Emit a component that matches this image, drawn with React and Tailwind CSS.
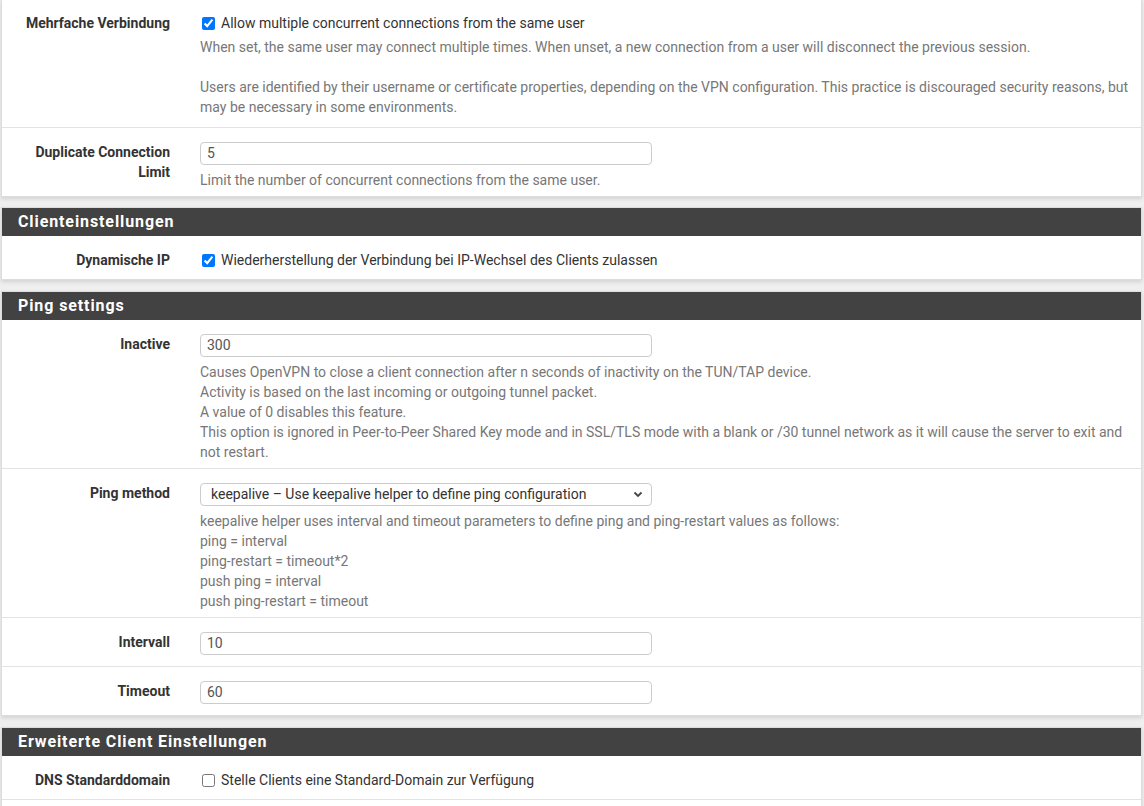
import React from 'react';

const font = { fontFamily: 'Roboto, "Liberation Sans", sans-serif' };

const Header = ({ children }) => (
  <div className="bg-[#424242] h-[28px] flex items-center px-4">
    <h2 className="text-white font-bold text-[16px] tracking-[0.9px]">{children}</h2>
  </div>
);

const Row = ({ label, children, last, extra }) => (
  <div className={`flex pt-[14px] ${extra ? 'pb-[10px]' : 'pb-[6px]'} ${last ? '' : 'border-b border-[#e3e3e3]'}`}>
    <div className="w-[188px] shrink-0 pl-[15px] pr-[20px] text-right">
      <div className="text-[14px] font-bold text-[#333] leading-[20px]">{label}</div>
    </div>
    <div className="flex-1 pl-[10px] pr-[8px]">{children}</div>
  </div>
);

const Help = ({ lines }) => (
  <div className="text-[14px] leading-[20px] text-[#777]">
    {lines.map((l, i) => (
      <div key={i} className="min-h-[20px]">{l}</div>
    ))}
  </div>
);

const TextInput = ({ value }) => (
  <div className="w-[452px] h-[23px] mb-[5px] border border-[#ccc] rounded-[4px] bg-white flex items-center pl-[6px] text-[14px] text-[#555]">
    {value}
  </div>
);

const Check = ({ checked, text }) => (
  <label className="flex items-center h-[20px] mb-[3px] text-[14px] text-[#333]">
    <input
      type="checkbox"
      defaultChecked={checked}
      className="w-[13px] h-[13px] ml-[2px] mr-[6px] accent-[#0075ff]"
    />
    {text}
  </label>
);

const Select = ({ value }) => (
  <div className="w-[452px] h-[23px] mb-[5px] border border-[#ccc] rounded-[4px] bg-white flex items-center justify-between pl-[10px] pr-[8px] text-[14px] text-[#333]">
    <span>{value}</span>
    <svg width="10" height="7" viewBox="0 0 10 7">
      <path d="M1.5 1.5 L5 5 L8.5 1.5" fill="none" stroke="#444" strokeWidth="1.8" />
    </svg>
  </div>
);

const Panel = ({ title, children, top, gap = 'mt-[11px]' }) => (
  <div className={`bg-white border border-[#ddd] shadow-[0_2px_4px_rgba(0,0,0,0.12)] ${top ? 'border-t-0 -mt-px' : gap}`}>
    {title && <Header>{title}</Header>}
    {children}
  </div>
);

export default function App() {
  return (
    <div className="min-h-screen bg-[#efefef] pl-[1px] pr-[2px] overflow-hidden" style={font}>
      <Panel top>
        <Row label="Mehrfache Verbindung" extra>
          <Check checked text="Allow multiple concurrent connections from the same user" />
          <div className="mt-[4px]">
            <Help
              lines={[
                'When set, the same user may connect multiple times. When unset, a new connection from a user will disconnect the previous session.',
                '',
                'Users are identified by their username or certificate properties, depending on the VPN configuration. This practice is discouraged security reasons, but may be necessary in some environments.',
              ]}
            />
          </div>
        </Row>
        <Row label="Duplicate Connection Limit" last>
          <TextInput value="5" />
          <Help lines={['Limit the number of concurrent connections from the same user.']} />
        </Row>
      </Panel>

      <Panel title="Clienteinstellungen" gap="mt-[10px]">
        <Row label="Dynamische IP" last>
          <Check checked text="Wiederherstellung der Verbindung bei IP-Wechsel des Clients zulassen" />
        </Row>
      </Panel>

      <Panel title="Ping settings">
        <Row label="Inactive">
          <TextInput value="300" />
          <Help
            lines={[
              'Causes OpenVPN to close a client connection after n seconds of inactivity on the TUN/TAP device.',
              'Activity is based on the last incoming or outgoing tunnel packet.',
              'A value of 0 disables this feature.',
              'This option is ignored in Peer-to-Peer Shared Key mode and in SSL/TLS mode with a blank or /30 tunnel network as it will cause the server to exit and not restart.',
            ]}
          />
        </Row>
        <Row label="Ping method">
          <Select value="keepalive – Use keepalive helper to define ping configuration" />
          <Help
            lines={[
              'keepalive helper uses interval and timeout parameters to define ping and ping-restart values as follows:',
              'ping = interval',
              'ping-restart = timeout*2',
              'push ping = interval',
              'push ping-restart = timeout',
            ]}
          />
        </Row>
        <Row label="Intervall">
          <TextInput value="10" />
        </Row>
        <Row label="Timeout" last>
          <TextInput value="60" />
        </Row>
      </Panel>

      <Panel title="Erweiterte Client Einstellungen">
        <Row label="DNS Standarddomain">
          <Check text="Stelle Clients eine Standard-Domain zur Verfügung" />
        </Row>
        <div className="h-[40px]" />
      </Panel>
    </div>
  );
}
